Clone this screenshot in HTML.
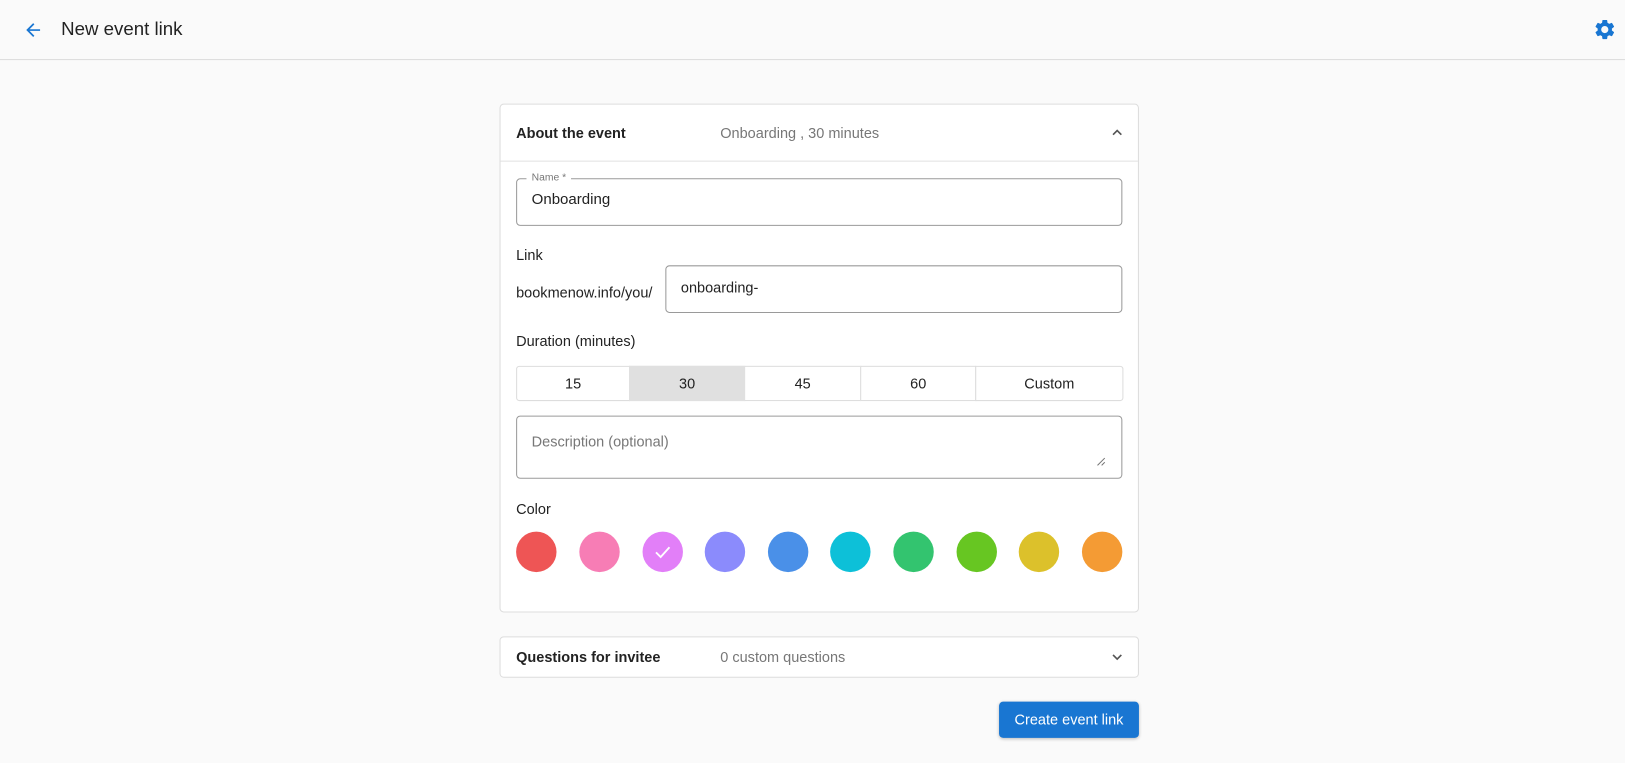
<!DOCTYPE html>
<html><head><meta charset="utf-8"><style>
html,body{margin:0;padding:0;width:1625px;height:763px;overflow:hidden;background:#fafafa;font-family:"Liberation Sans",Arial,sans-serif;color:#222}
#w{position:absolute;left:0;top:0;width:1568px;height:736px;transform:scale(1.03635);transform-origin:0 0}
.a{position:absolute;white-space:nowrap}
.t{font-size:14px;line-height:16px}
.box{position:absolute;border:1px solid #9a9a9a;border-radius:4px;background:#fff;box-sizing:border-box}
.card{position:absolute;background:#fff;border:1px solid #ddd;border-radius:4px;box-sizing:border-box}
.c{position:absolute;width:39px;height:39px;border-radius:50%;top:513px}
.seg{position:absolute;top:353px;height:34px;box-sizing:border-box;border:1px solid #ddd;font-size:14px;line-height:32px;text-align:center;background:#fff}
</style></head><body><div id="w">
<div class="a" style="left:0;top:57px;width:1568px;height:1px;background:#dcdcdc"></div>
<svg class="a" style="left:22px;top:19px" width="20" height="20" viewBox="0 0 24 24"><path d="M20 11H7.83l5.59-5.59L12 4l-8 8 8 8 1.41-1.41L7.83 13H20v-2z" fill="#1976d2"/></svg>
<div class="a" style="left:59px;top:18px;font-size:18px;line-height:20px;color:#222">New event link</div>
<svg class="a" style="left:1537px;top:17px" width="23" height="23" viewBox="0 0 24 24"><path fill="#1976d2" d="M19.14 12.94c.04-.3.06-.61.06-.94 0-.32-.02-.64-.07-.94l2.03-1.58a.49.49 0 0 0 .12-.61l-1.92-3.32a.488.488 0 0 0-.59-.22l-2.39.96c-.5-.38-1.03-.7-1.62-.94l-.36-2.54a.484.484 0 0 0-.48-.41h-3.84c-.24 0-.43.17-.47.41l-.36 2.54c-.59.24-1.13.57-1.62.94l-2.39-.96c-.22-.08-.47 0-.59.22L2.74 8.87c-.12.21-.08.47.12.61l2.03 1.58c-.05.3-.09.63-.09.94s.02.64.07.94l-2.03 1.58a.49.49 0 0 0-.12.61l1.92 3.32c.12.22.37.29.59.22l2.39-.96c.5.38 1.03.7 1.62.94l.36 2.54c.05.24.24.41.48.41h3.84c.24 0 .44-.17.47-.41l.36-2.54c.59-.24 1.13-.56 1.62-.94l2.39.96c.22.08.47 0 .59-.22l1.92-3.32c.12-.22.07-.47-.12-.61l-2.01-1.58zM12 15.6c-1.98 0-3.6-1.62-3.6-3.6s1.62-3.6 3.6-3.6 3.6 1.62 3.6 3.6-1.62 3.6-3.6 3.6z"/></svg>

<div class="card" style="left:482px;top:100px;width:617px;height:491px"></div>
<div class="a" style="left:483px;top:155px;width:615px;height:1px;background:#e2e2e2"></div>
<div class="a t" style="left:498px;top:120px;font-weight:bold">About the event</div>
<div class="a t" style="left:695px;top:120px;color:#777">Onboarding , 30 minutes</div>
<svg class="a" style="left:1071px;top:121px" width="14" height="14" viewBox="0 0 14 14"><path d="M3 9l4-4 4 4" stroke="#555" stroke-width="1.6" fill="none"/></svg>

<div class="box" style="left:498px;top:172px;width:585px;height:46px"></div>
<div class="a" style="left:508px;top:166px;background:#fff;padding:0 5px;font-size:10px;line-height:12px;color:#777">Name *</div>
<div class="a t" style="left:513px;top:185px;font-size:14.5px">Onboarding</div>

<div class="a t" style="left:498px;top:238px">Link</div>
<div class="a t" style="left:498px;top:274px">bookmenow.info/you/</div>
<div class="box" style="left:642px;top:256px;width:441px;height:46px"></div>
<div class="a t" style="left:657px;top:269px">onboarding-</div>

<div class="a t" style="left:498px;top:321px">Duration (minutes)</div>
<div class="seg" style="left:498px;width:110px;border-radius:3px 0 0 3px">15</div>
<div class="seg" style="left:607px;width:112px;background:#e0e0e0;border-color:#e0e0e0">30</div>
<div class="seg" style="left:718px;width:113px">45</div>
<div class="seg" style="left:830px;width:112px">60</div>
<div class="seg" style="left:941px;width:143px;border-radius:0 3px 3px 0">Custom</div>

<div class="box" style="left:498px;top:401px;width:585px;height:61px"></div>
<div class="a t" style="left:513px;top:418px;color:#777">Description (optional)</div>
<svg class="a" style="left:1058px;top:441px" width="9" height="9" viewBox="0 0 9 9"><path d="M8 1L1 8M8 5L5 8" stroke="#777" stroke-width="1"/></svg>

<div class="a t" style="left:498px;top:483px">Color</div>
<div class="c" style="left:498px;background:#ee5555"></div>
<div class="c" style="left:559px;background:#f77db5"></div>
<div class="c" style="left:620px;background:#e27ff8"><svg style="position:absolute;left:11px;top:11px" width="17" height="17" viewBox="0 0 17 17"><path d="M2 9l4.5 4.5L15 4" stroke="#fff" stroke-width="1.8" fill="none"/></svg></div>
<div class="c" style="left:680px;background:#8b8bfc"></div>
<div class="c" style="left:741px;background:#4a90e8"></div>
<div class="c" style="left:801px;background:#0dc0d8"></div>
<div class="c" style="left:862px;background:#33c46f"></div>
<div class="c" style="left:923px;background:#67c622"></div>
<div class="c" style="left:983px;background:#dcc12b"></div>
<div class="c" style="left:1044px;background:#f49b34"></div>

<div class="card" style="left:482px;top:614px;width:617px;height:40px"></div>
<div class="a t" style="left:498px;top:626px;font-weight:bold">Questions for invitee</div>
<div class="a t" style="left:695px;top:626px;color:#777">0 custom questions</div>
<svg class="a" style="left:1071px;top:627px" width="14" height="14" viewBox="0 0 14 14"><path d="M3 5l4 4 4-4" stroke="#555" stroke-width="1.6" fill="none"/></svg>

<div class="a" style="left:964px;top:677px;width:135px;height:35px;background:#1976d2;border-radius:4px;color:#fff;font-size:14px;line-height:35px;text-align:center;box-shadow:0 1px 3px rgba(0,0,0,.25)">Create event link</div>
</div></body></html>
